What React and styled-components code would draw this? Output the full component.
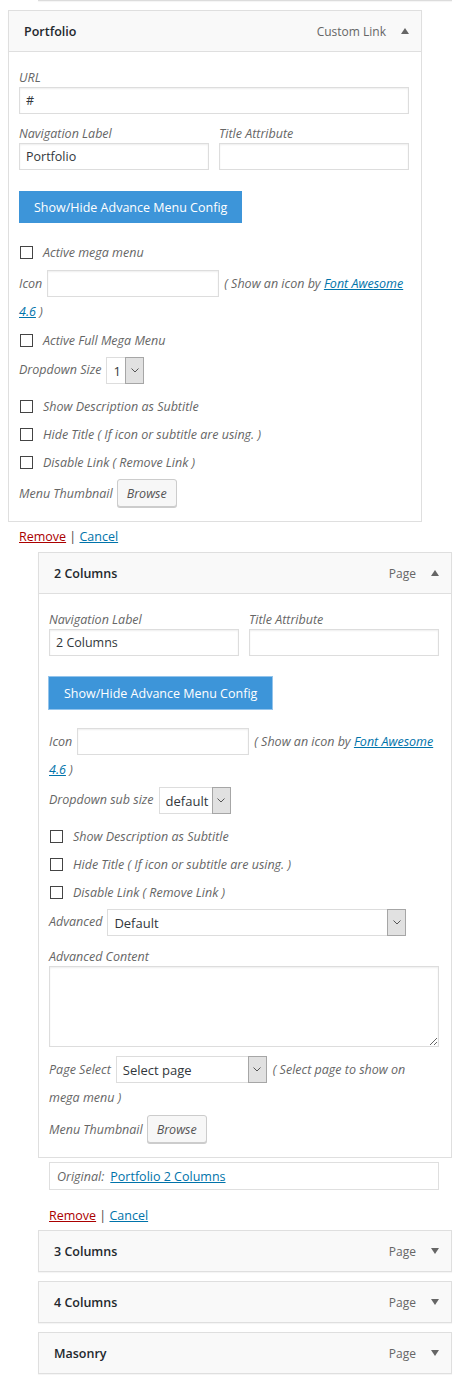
import React from 'react'
import styled, { createGlobalStyle } from 'styled-components'

const GlobalStyle = createGlobalStyle`
  body {
    margin: 0;
    background: #fff;
    font-family: "Open Sans", "Noto Sans", sans-serif;
    font-size: 12.5px;
    color: #444;
  }
`
const Page = styled.div`
  padding-bottom: 1px;
`
const PrevEdge = styled.div`
  margin-left: 38px;
  width: 414px;
  height: 1px;
  background: #dcdcdc;
  box-shadow: 0 1px 1px rgba(0, 0, 0, 0.05);
`
const Item = styled.div`
  margin-left: ${p => p.$depth * 30 + 8}px;
  margin-top: ${p => p.$top || 0}px;
  margin-bottom: ${p => (p.$open ? 0 : 9)}px;
  width: 414px;
`
const Handle = styled.div`
  display: flex;
  align-items: center;
  height: 42px;
  box-sizing: border-box;
  padding: 0 12px 0 15px;
  border: 1px solid #dfdfdf;
  background: #f9f9f9;
  box-shadow: 0 1px 1px rgba(0, 0, 0, 0.04);
`
const Title = styled.span`
  flex: 1;
  font-weight: 600;
  font-size: 12.5px;
  color: #23282d;
`
const Type = styled.span`
  font-size: 12px;
  color: #666;
  margin-right: 15px;
`
const Arrow = styled.span`
  width: 0;
  height: 0;
  border-left: 4.5px solid transparent;
  border-right: 4.5px solid transparent;
  ${p => (p.$up ? 'border-bottom' : 'border-top')}: 6px solid #666;
`
const Settings = styled.div`
  padding: 15px 10px 14px;
  border: 1px solid #dfdfdf;
  border-top: none;
  background: #fff;
`
const Field = styled.div`
  margin: 11px 0 9px;
  &:first-child {
    margin-top: 1px;
  }
`
const Label = styled.label`
  display: block;
  line-height: 19px;
  font-style: italic;
  color: #666;
`
const Input = styled.input`
  display: ${p => (p.$inline ? 'inline-block' : 'block')};
  vertical-align: top;
  width: ${p => p.$w}px;
  height: 27px;
  margin: ${p => (p.$inline ? '0 5px' : '0')};
  padding: 0 6px;
  box-sizing: border-box;
  border: 1px solid #ddd;
  box-shadow: inset 0 1px 2px rgba(0, 0, 0, 0.07);
  font-family: inherit;
  font-size: 12.5px;
  color: #32373c;
  outline: none;
`
const Split = styled.div`
  display: flex;
  gap: 10px;
  margin: 10px 0 9px;
  &:first-child {
    margin-top: 1px;
  }
`
const ButtonRow = styled.div`
  margin-top: 21px;
  padding-bottom: 15px;
`
const BlueButton = styled.button`
  height: 32px;
  padding: 0 15px;
  border: none;
  background: #3d95d9;
  color: #fff;
  font-family: inherit;
  font-size: 12.5px;
  box-shadow: ${p => (p.$focus ? '0 0 0 1px #93c4ec' : 'none')};
`
const CheckRow = styled.div`
  display: flex;
  align-items: center;
  height: 28px;
  font-style: italic;
  color: #666;
`
const Box = styled.span`
  width: 13px;
  height: 13px;
  box-sizing: border-box;
  margin: 1px 10px 0 1px;
  border: 1px solid #444;
  background: #fff;
`
const WrapRow = styled.div`
  margin-top: 4px;
  margin-right: ${p => p.$right || 0}px;
  line-height: 28px;
  font-style: italic;
  color: #666;
`
const Link = styled.a`
  color: ${p => (p.$danger ? '#a00' : '#0073aa')};
  font-style: ${p => (p.$plain ? 'normal' : 'inherit')};
  text-decoration: underline;
`
const SelectRow = styled.div`
  display: flex;
  align-items: center;
  margin: 3px 0 8px;
  font-style: italic;
  color: #666;
`
const SelectLabel = styled.span`
  padding-bottom: 3px;
`
const Select = styled.span`
  display: inline-flex;
  vertical-align: top;
  width: ${p => p.$w}px;
  height: 27px;
  margin: 0 6px 0 5px;
  box-sizing: border-box;
  border: 1px solid #ddd;
  background: #fff;
  font-style: normal;
  font-size: 13px;
  line-height: 25px;
  color: #32373c;
`
const SelectValue = styled.span`
  flex: 1;
  padding: 1px 0 0 6px;
  white-space: nowrap;
`
const SelectArrow = styled.span`
  display: flex;
  align-items: center;
  justify-content: center;
  width: 17px;
  margin: -1px -1px -1px 0;
  border: 1px solid #a6a6a6;
  background: #e1e1e1;
`
const Textarea = styled.textarea`
  display: block;
  width: 390px;
  height: 81px;
  box-sizing: border-box;
  border: 1px solid #ddd;
  box-shadow: inset 0 1px 2px rgba(0, 0, 0, 0.07);
  resize: vertical;
  outline: none;
`
const ThumbRow = styled.div`
  display: flex;
  align-items: center;
  height: 28px;
  margin-top: 3px;
  font-style: italic;
  color: #666;
`
const Browse = styled.button`
  width: 60px;
  height: 28px;
  margin-left: 4px;
  border: 1px solid #ccc;
  border-radius: 3px;
  background: #f7f7f7;
  box-shadow: 0 1px 0 #ccc;
  font-family: inherit;
  font-size: 12.5px;
  font-style: italic;
  color: #555;
`
const Original = styled.div`
  display: flex;
  align-items: center;
  gap: 6px;
  width: 390px;
  height: 28px;
  box-sizing: border-box;
  margin: 4px 0 0 11px;
  padding-left: 7px;
  border: 1px solid #dfdfdf;
  font-style: italic;
  color: #666;
`
const Actions = styled.div`
  margin: ${p => p.$top}px 0 ${p => p.$bottom}px 11px;
  line-height: 18px;
  color: #444;
`

const Chevron = () => (
  <svg width="8" height="5" viewBox="0 0 8 5">
    <path d="M0.5 0.5 L4 4 L7.5 0.5" fill="none" stroke="#555" strokeWidth="1" />
  </svg>
)

const Dropdown = ({ w, value }) => (
  <Select $w={w}>
    <SelectValue>{value}</SelectValue>
    <SelectArrow><Chevron /></SelectArrow>
  </Select>
)

const Check = ({ children }) => (
  <CheckRow>
    <Box />
    {children}
  </CheckRow>
)

const Header = ({ title, type, open }) => (
  <Handle>
    <Title>{title}</Title>
    <Type>{type}</Type>
    <Arrow $up={open} />
  </Handle>
)

const IconRow = () => (
  <WrapRow $right={-6}>
    Icon<Input $inline $w={172} />( Show an icon by <Link href="#">Font Awesome 4.6</Link> )
  </WrapRow>
)

const Thumbnail = () => (
  <ThumbRow>
    Menu Thumbnail
    <Browse>Browse</Browse>
  </ThumbRow>
)

const Controls = ({ top, bottom }) => (
  <Actions $top={top} $bottom={bottom}>
    <Link href="#" $danger>Remove</Link> | <Link href="#">Cancel</Link>
  </Actions>
)

export default function App() {
  return (
    <Page>
      <GlobalStyle />
      <PrevEdge />

      <Item $depth={0} $top={9} $open>
        <Header title="Portfolio" type="Custom Link" open />
        <Settings>
          <Field>
            <Label>URL</Label>
            <Input $w={390} defaultValue="#" />
          </Field>
          <Split>
            <div>
              <Label>Navigation Label</Label>
              <Input $w={190} defaultValue="Portfolio" />
            </div>
            <div>
              <Label>Title Attribute</Label>
              <Input $w={190} />
            </div>
          </Split>
          <ButtonRow>
            <BlueButton>Show/Hide Advance Menu Config</BlueButton>
          </ButtonRow>
          <Check>Active mega menu</Check>
          <IconRow />
          <Check>Active Full Mega Menu</Check>
          <SelectRow>
            <SelectLabel>Dropdown Size</SelectLabel>
            <Dropdown w={38} value="1" />
          </SelectRow>
          <Check>Show Description as Subtitle</Check>
          <Check>Hide Title ( If icon or subtitle are using. )</Check>
          <Check>Disable Link ( Remove Link )</Check>
          <Thumbnail />
        </Settings>
        <Controls top={6} bottom={6} />
      </Item>

      <Item $depth={1} $open>
        <Header title="2 Columns" type="Page" open />
        <Settings>
          <Split>
            <div>
              <Label>Navigation Label</Label>
              <Input $w={190} defaultValue="2 Columns" />
            </div>
            <div>
              <Label>Title Attribute</Label>
              <Input $w={190} />
            </div>
          </Split>
          <ButtonRow>
            <BlueButton $focus>Show/Hide Advance Menu Config</BlueButton>
          </ButtonRow>
          <IconRow />
          <SelectRow>
            <SelectLabel>Dropdown sub size</SelectLabel>
            <Dropdown w={72} value="default" />
          </SelectRow>
          <Check>Show Description as Subtitle</Check>
          <Check>Hide Title ( If icon or subtitle are using. )</Check>
          <Check>Disable Link ( Remove Link )</Check>
          <SelectRow>
            <SelectLabel>Advanced</SelectLabel>
            <Dropdown w={299} value="Default" />
          </SelectRow>
          <Field>
            <Label>Advanced Content</Label>
            <Textarea />
          </Field>
          <WrapRow $right={24}>
            Page Select<Dropdown w={151} value="Select page" />( Select page to show on mega menu )
          </WrapRow>
          <Thumbnail />
        </Settings>
        <Original>
          Original:
          <Link href="#" $plain>Portfolio 2 Columns</Link>
        </Original>
        <Controls top={17} bottom={5} />
      </Item>

      <Item $depth={1}>
        <Header title="3 Columns" type="Page" />
      </Item>
      <Item $depth={1}>
        <Header title="4 Columns" type="Page" />
      </Item>
      <Item $depth={1}>
        <Header title="Masonry" type="Page" />
      </Item>
    </Page>
  )
}
